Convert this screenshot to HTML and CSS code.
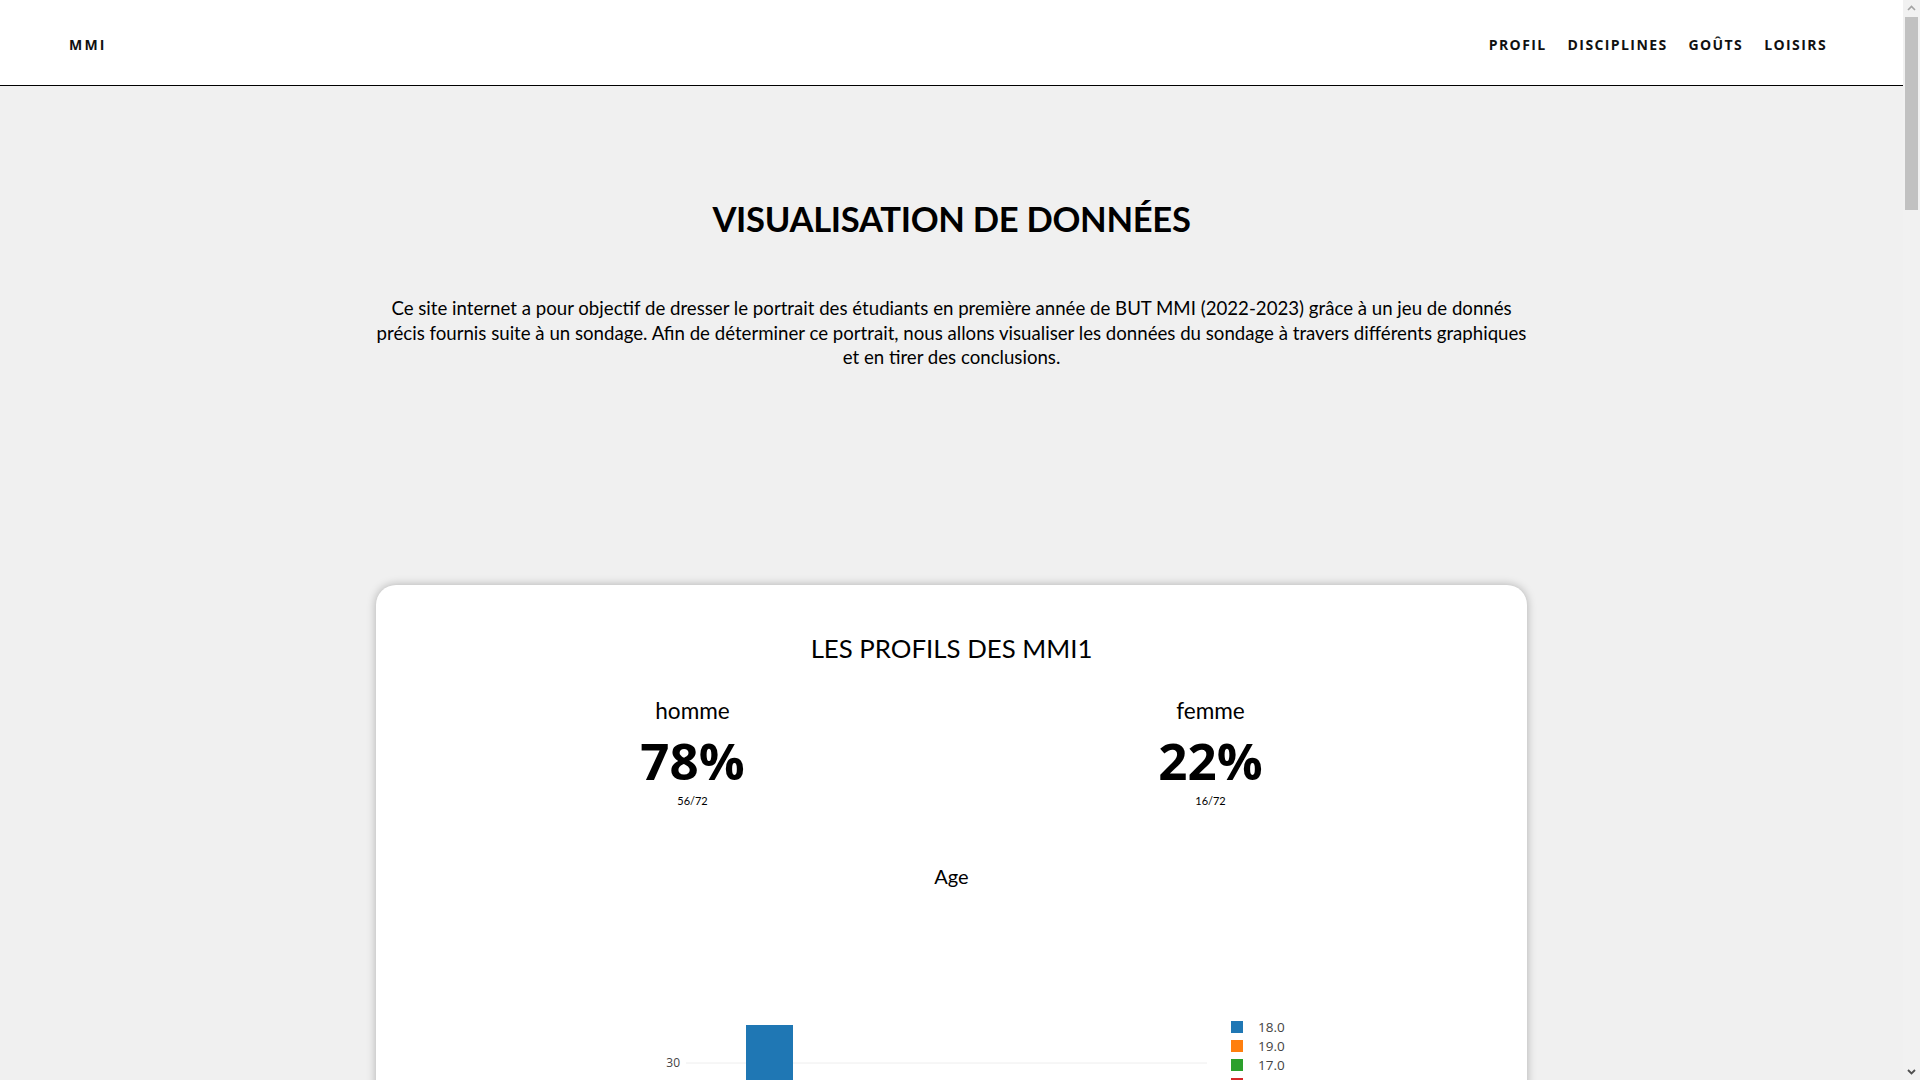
FILE: index.html
```html
<!DOCTYPE html>
<html lang="fr">
<head>
<meta charset="utf-8">
<title>Visualisation de données - MMI</title>
<link rel="stylesheet" href="styles.css">
</head>
<body>
<header class="topbar">
  <a class="brand" href="#">MMI</a>
  <nav class="menu">
    <a href="#profil">PROFIL</a>
    <a href="#disciplines">DISCIPLINES</a>
    <a href="#gouts">GOÛTS</a>
    <a href="#loisirs">LOISIRS</a>
  </nav>
</header>
<main class="page">
  <h1 class="page-title">VISUALISATION DE DONNÉES</h1>
  <p class="intro">Ce site internet a pour objectif de dresser le portrait des étudiants en première année de BUT MMI (2022-2023) grâce à un jeu de donnés précis fournis suite à un sondage. Afin de déterminer ce portrait, nous allons visualiser les données du sondage à travers différents graphiques et en tirer des conclusions.</p>

  <section class="card" id="profil">
    <h2 class="card-title">LES PROFILS DES MMI1</h2>
    <div class="stats">
      <div class="stat">
        <div class="stat-label">homme</div>
        <div class="stat-value">78%</div>
        <div class="stat-count">56/72</div>
      </div>
      <div class="stat">
        <div class="stat-label">femme</div>
        <div class="stat-value">22%</div>
        <div class="stat-count">16/72</div>
      </div>
    </div>
    <svg class="chart" width="1151" height="520" viewBox="0 0 1151 520">
      <text class="chart-title" x="575.5" y="54" text-anchor="middle">Age</text>
      <line class="grid" x1="310" y1="233" x2="831" y2="233"/>
      <line class="grid" x1="310" y1="308" x2="831" y2="308"/>
      <line class="grid" x1="310" y1="383" x2="831" y2="383"/>
      <line class="zero" x1="310" y1="458" x2="831" y2="458"/>
      <text class="tick" x="304" y="237" text-anchor="end">30</text>
      <text class="tick" x="304" y="312" text-anchor="end">20</text>
      <text class="tick" x="304" y="387" text-anchor="end">10</text>
      <text class="tick" x="304" y="462" text-anchor="end">0</text>
      <rect x="370" y="195" width="47" height="263" fill="#1f77b4"/>
      <rect x="470" y="346" width="47" height="112" fill="#ff7f0e"/>
      <rect x="570" y="413" width="47" height="45" fill="#2ca02c"/>
      <rect x="670" y="420" width="47" height="38" fill="#d62728"/>
      <rect x="770" y="450" width="47" height="8" fill="#9467bd"/>
      <g class="legend">
        <rect x="855" y="191" width="12" height="12" fill="#1f77b4"/>
        <text x="882" y="202">18.0</text>
        <rect x="855" y="210" width="12" height="12" fill="#ff7f0e"/>
        <text x="882" y="221">19.0</text>
        <rect x="855" y="229" width="12" height="12" fill="#2ca02c"/>
        <text x="882" y="240">17.0</text>
        <rect x="855" y="248" width="12" height="12" fill="#d62728"/>
        <text x="882" y="259">20.0</text>
        <rect x="855" y="267" width="12" height="12" fill="#9467bd"/>
        <text x="882" y="278">21.0</text>
      </g>
    </svg>
  </section>

  <section class="card card-tall" id="disciplines">
    <h2 class="card-title">LES DISCIPLINES</h2>
  </section>
  <section class="card card-tall" id="gouts">
    <h2 class="card-title">LES GOÛTS</h2>
  </section>
  <section class="card card-tall" id="loisirs">
    <h2 class="card-title">LES LOISIRS</h2>
  </section>
</main>

<div class="scrollbar" aria-hidden="true">
  <div class="scroll-btn scroll-up">
    <svg width="17" height="17" viewBox="0 0 17 17"><path d="M5 10 L8.5 6.5 L12 10" fill="none" stroke="#a3a3a3" stroke-width="1.6"/></svg>
  </div>
  <div class="scroll-track">
    <div class="scroll-thumb"></div>
  </div>
  <div class="scroll-btn scroll-down">
    <svg width="17" height="17" viewBox="0 0 17 17"><path d="M5 7 L8.5 10.5 L12 7" fill="none" stroke="#505050" stroke-width="1.8"/></svg>
  </div>
</div>
</body>
</html>
```
FILE: styles.css
```css
* { box-sizing: border-box; }

html, body {
  margin: 0;
  padding: 0;
}

body {
  background: #f0f0f0;
  color: #000;
  font-family: "Lato", "Open Sans", sans-serif;
  margin-right: 17px;
}

a { color: inherit; text-decoration: none; }

.topbar {
  height: 86px;
  background: #fff;
  border-bottom: 1px solid #000;
  display: flex;
  align-items: center;
  justify-content: space-between;
  padding: 3px 76px 0 69px;
}

.brand {
  font-family: "Open Sans", sans-serif;
  font-weight: 700;
  font-size: 14px;
  letter-spacing: 2.2px;
  color: #111;
}

.menu {
  display: flex;
  gap: 21px;
}

.menu a {
  font-family: "Open Sans", sans-serif;
  font-weight: 700;
  font-size: 14px;
  letter-spacing: 1.4px;
  color: #111;
}

.page {
  display: flex;
  flex-direction: column;
  align-items: center;
  padding-bottom: 200px;
}

.page-title {
  margin: 113px 0 0;
  font-family: "Lato", sans-serif;
  font-weight: 700;
  font-size: 34.6px;
  line-height: 40px;
  letter-spacing: -0.3px;
}

.intro {
  width: 1150px;
  margin: 57px 0 0;
  text-align: center;
  font-size: 18.65px;
  line-height: 24.5px;
}

.card {
  width: 1151px;
  margin-top: 215px;
  background: #fff;
  border-radius: 20px;
  box-shadow: 0 0 10px rgba(0, 0, 0, 0.28);
  padding-top: 45px;
  display: flex;
  flex-direction: column;
  align-items: center;
}

.card + .card { margin-top: 120px; }

.card-tall { min-height: 1300px; }

.card-title {
  margin: 0;
  font-weight: 400;
  font-size: 25.8px;
  line-height: 36px;
}

.stats {
  width: 1036px;
  margin-top: 30px;
  display: grid;
  grid-template-columns: 1fr 1fr;
}

.stat {
  display: flex;
  flex-direction: column;
  align-items: center;
}

.stat-label {
  font-size: 22.6px;
  line-height: 30px;
}

.stat-value {
  margin-top: 4px;
  font-family: "Open Sans", sans-serif;
  font-weight: 700;
  font-size: 51px;
  line-height: 60px;
}

.stat-count {
  margin-top: 3px;
  font-size: 11px;
  line-height: 16px;
}

.chart {
  display: block;
  margin-top: 21px;
  font-family: "Open Sans", sans-serif;
}

.chart-title {
  font-family: "Lato", sans-serif;
  font-size: 20px;
  fill: #000;
}

.grid { stroke: #eee; stroke-width: 1; }
.zero { stroke: #444; stroke-width: 1; }

.tick {
  font-size: 12px;
  fill: #444;
}

.legend text {
  font-size: 13.5px;
  fill: #444;
}

.scrollbar {
  position: fixed;
  top: 0;
  right: 0;
  width: 17px;
  height: 100vh;
  background: #f1f1f1;
  display: flex;
  flex-direction: column;
}

.scroll-btn {
  height: 17px;
  flex: none;
}

.scroll-btn svg { display: block; }

.scroll-track {
  flex: 1;
  padding: 0 2px;
}

.scroll-thumb {
  height: 193px;
  background: #c1c1c1;
}
```
